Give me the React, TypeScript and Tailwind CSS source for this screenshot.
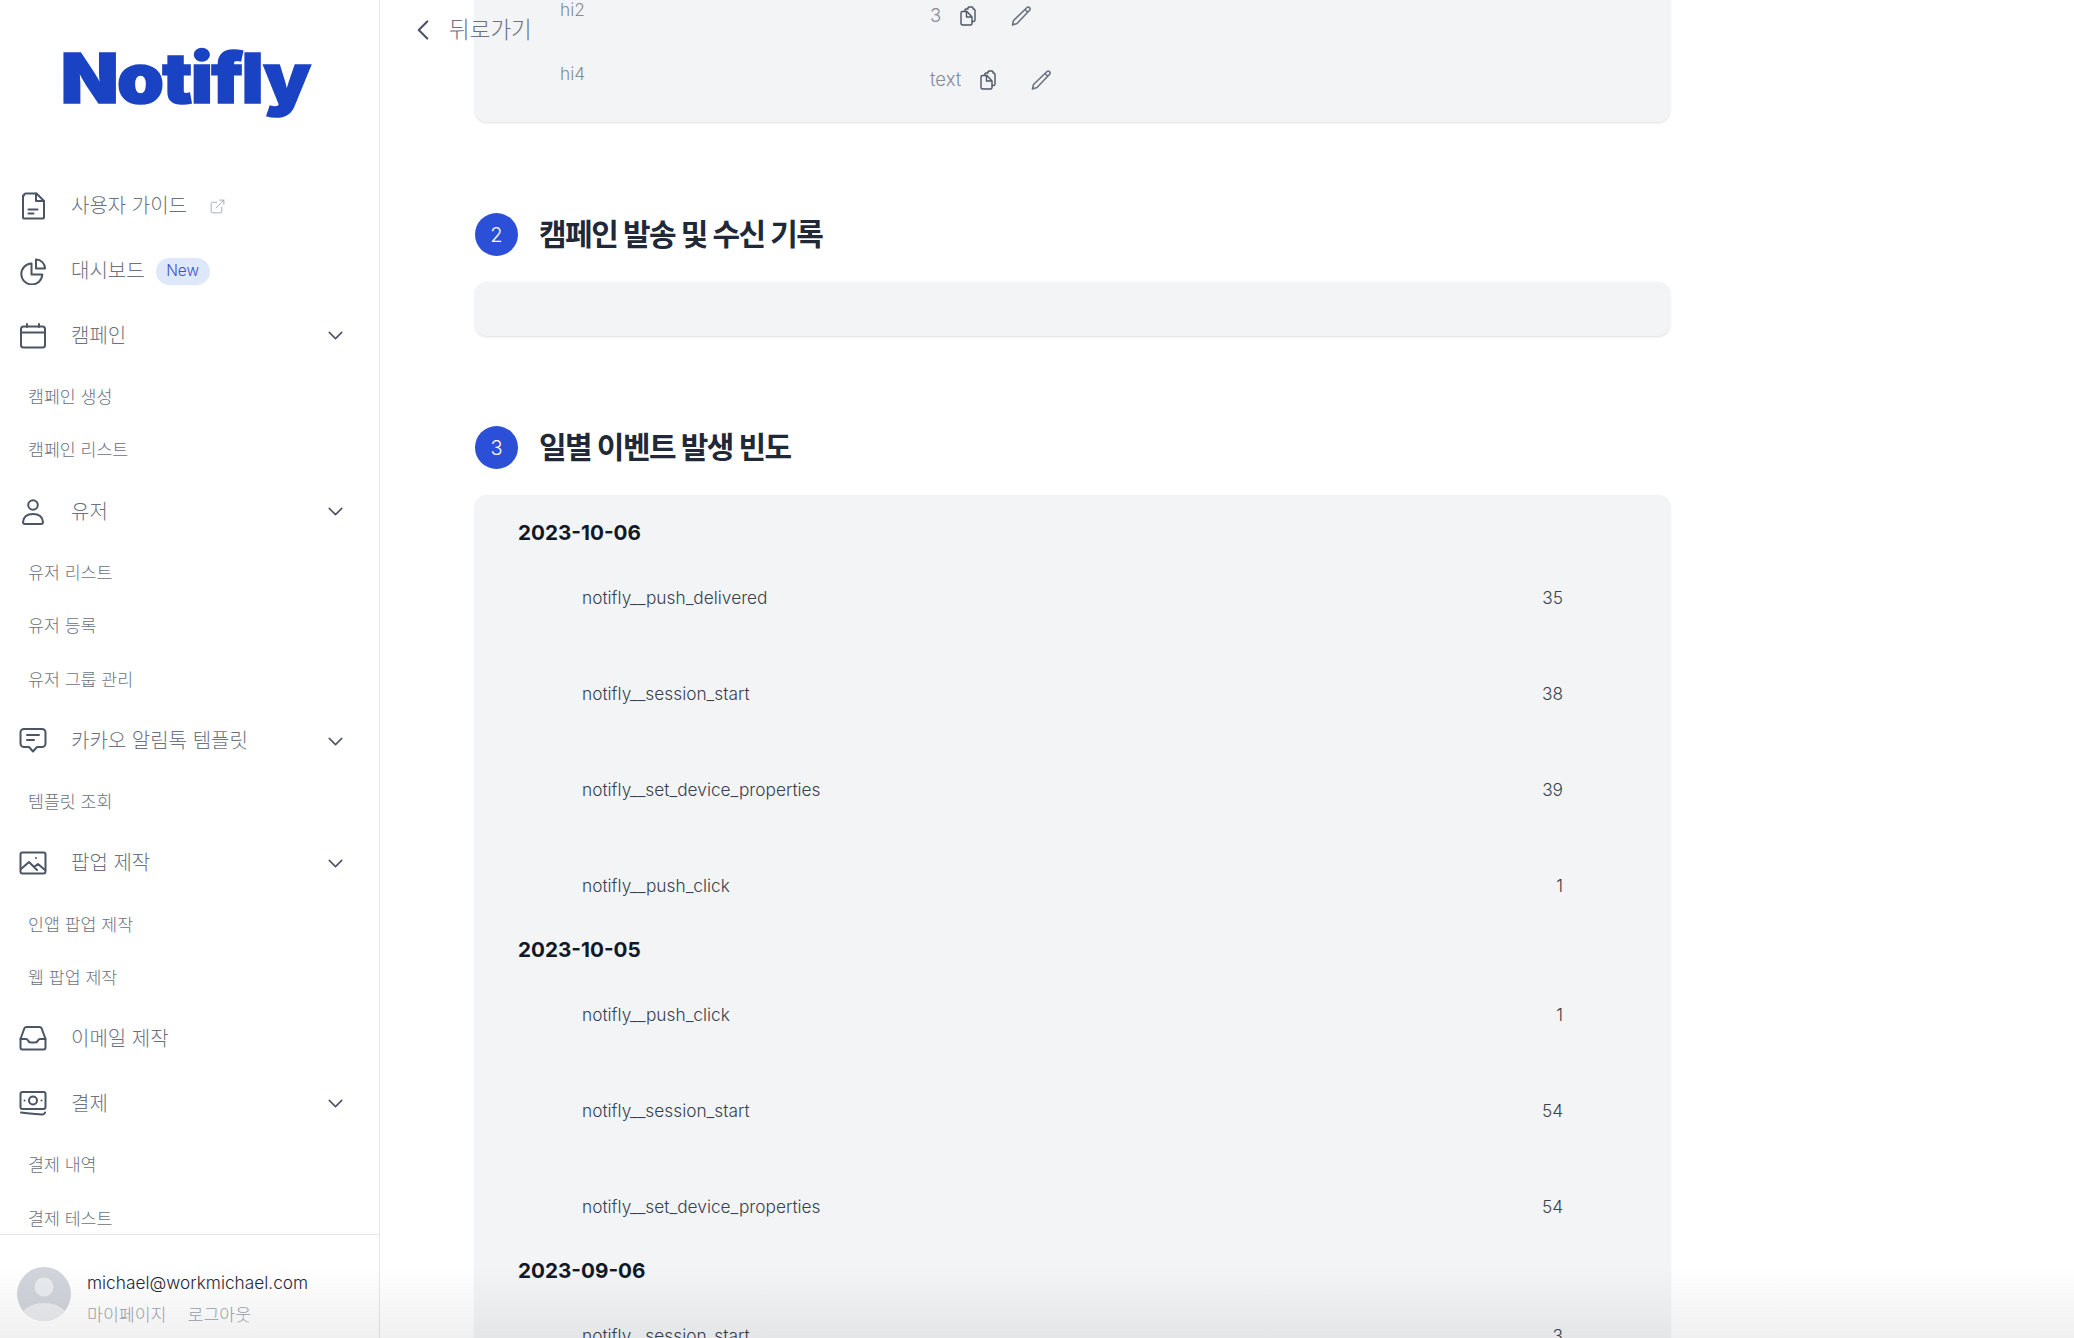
import { ChevronDown, ChevronLeft, ExternalLink } from 'lucide-react'
import type { ReactNode } from 'react'

const icons: Record<string, ReactNode> = {
  doc: (
    <>
      <path d="M5 3.500A2 2 0 0 1 7 1.500h10.500L25 9v16.500a1 1 0 0 1-1 1H5a1 1 0 0 1-1-1V3.500z" />
      <path d="M17 1.500V9h8" />
      <path d="M9.500 17.500h9M9.500 21.500h5" />
    </>
  ),
  pie: (
    <>
      <path d="M12.500 6.500a10.500 10.500 0 1 0 10.800 11H12.500V6.500z" />
      <path d="M17 2.500a9 9 0 0 1 9 9h-9v-9z" />
    </>
  ),
  calendar: (
    <>
      <rect x="2" y="4.500" width="24" height="21" rx="2.500" />
      <path d="M2 10.500h24M8 2v3M20 2v3" />
    </>
  ),
  user: (
    <>
      <circle cx="14" cy="7" r="4.800" />
      <path d="M14 16c-6 0-9.500 3.200-10 8 0 1.300 1 2 2 2h16c1 0 2-.7 2-2-.5-4.800-4-8-10-8z" />
    </>
  ),
  chat: (
    <>
      <path d="M5.500 2h17A3.500 3.500 0 0 1 26.500 5.500v11a3.500 3.500 0 0 1-3.500 3.500h-5l-4 4.500-4-4.500H5a3.500 3.500 0 0 1-3.500-3.500v-11A3.500 3.500 0 0 1 5.500 2z" />
      <path d="M8 8h12M8 13h7" />
    </>
  ),
  image: (
    <>
      <rect x="1.500" y="3.500" width="25" height="21" rx="2" />
      <path d="M2 20l8-7 8 8M15 18l4-3 7 6" />
      <circle cx="17" cy="9" r="1" fill="currentColor" stroke="none" />
    </>
  ),
  inbox: (
    <>
      <path d="M7.500 2h13c1 0 1.800.6 2.200 1.500L26.500 14v8.500a2 2 0 0 1-2 2h-21a2 2 0 0 1-2-2V14L5.300 3.500C5.700 2.600 6.500 2 7.500 2z" />
      <path d="M1.500 14h5.500c1 0 1.500.5 2 1.500.6 1.300 1.500 2 3 2h4c1.500 0 2.400-.7 3-2 .5-1 1-1.500 2-1.500h5.500" />
    </>
  ),
  cash: (
    <>
      <rect x="1.500" y="2" width="25" height="17" rx="2" />
      <circle cx="14" cy="10.500" r="4" />
      <path d="M5.500 10.500h.01M22.500 10.500h.01" />
      <path d="M2 22.500c7 1 14 1.500 21 2 1.500 0 2.500-.5 3-2" />
    </>
  ),
}

function NavIcon({ name }: { name: string }) {
  return (
    <svg
      viewBox="0 0 28 28"
      width={28}
      height={28}
      fill="none"
      stroke="currentColor"
      strokeWidth={2}
      strokeLinecap="round"
      strokeLinejoin="round"
      className="text-[#4b5563] shrink-0"
    >
      {icons[name]}
    </svg>
  )
}

function NavItem({ icon, label, arrow, children }: { icon: string; label: string; arrow?: boolean; children?: ReactNode }) {
  return (
    <div className="flex items-center h-[64.7px] pl-[19px] pr-[31px] shrink-0">
      <NavIcon name={icon} />
      <span className="ml-[24px] text-[20px] font-light text-[#6b7280] whitespace-nowrap">{label}</span>
      {children}
      {arrow && <ChevronDown size={25} strokeWidth={1.5} className="ml-auto text-[#4b5563]" />}
    </div>
  )
}

function SubList({ items }: { items: string[] }) {
  return (
    <div className="flex flex-col my-[2px] shrink-0">
      {items.map((item) => (
        <div key={item} className="h-[53.6px] flex items-center pl-[28px] text-[17.3px] font-light text-[#6b7280]">
          {item}
        </div>
      ))}
    </div>
  )
}

function Sidebar() {
  return (
    <aside className="w-[380px] h-full shrink-0 border-r border-[#e5e7eb] flex flex-col bg-white">
      <div className="h-[174px] shrink-0 flex justify-center pt-[36px] pr-[8px]">
        <span className="font-['Inter'] font-black text-[69px] leading-[84px] tracking-[-1.5px] text-[#1a43c4] [-webkit-text-stroke:1.5px_#1a43c4] scale-x-[1.09]">
          Notifly
        </span>
      </div>
      <nav className="flex-1 overflow-hidden flex flex-col">
        <NavItem icon="doc" label="사용자 가이드">
          <ExternalLink size={17} strokeWidth={1.25} className="ml-[22px] text-[#9ca3af]" />
        </NavItem>
        <NavItem icon="pie" label="대시보드">
          <span className="ml-[11px] h-[27px] w-[54px] rounded-full bg-[#dfe8fb] text-[#3b54c4] text-[15.4px] font-light flex items-center justify-center">
            New
          </span>
        </NavItem>
        <NavItem icon="calendar" label="캠페인" arrow />
        <SubList items={['캠페인 생성', '캠페인 리스트']} />
        <NavItem icon="user" label="유저" arrow />
        <SubList items={['유저 리스트', '유저 등록', '유저 그룹 관리']} />
        <NavItem icon="chat" label="카카오 알림톡 템플릿" arrow />
        <SubList items={['템플릿 조회']} />
        <NavItem icon="image" label="팝업 제작" arrow />
        <SubList items={['인앱 팝업 제작', '웹 팝업 제작']} />
        <NavItem icon="inbox" label="이메일 제작" />
        <NavItem icon="cash" label="결제" arrow />
        <SubList items={['결제 내역', '결제 테스트']} />
      </nav>
      <div className="h-[104px] shrink-0 border-t border-[#e5e7eb] flex pl-[17px] pt-[33px]">
        <svg viewBox="0 0 54 54" width={54} height={54} className="shrink-0 -mt-[1px]">
          <clipPath id="avatar-clip">
            <circle cx="27" cy="27" r="27" />
          </clipPath>
          <g clipPath="url(#avatar-clip)">
            <rect width="54" height="54" fill="#d1d5db" />
            <circle cx="27" cy="20" r="9.500" fill="#e9ebee" />
            <ellipse cx="27" cy="54" rx="25" ry="18" fill="#e9ebee" />
          </g>
        </svg>
        <div className="ml-[16px] flex flex-col">
          <span className="text-[17.3px] leading-[28px] font-light text-[#1f2937] mt-[1px]">michael@workmichael.com</span>
          <div className="flex gap-[21px] mt-[4px] text-[17.3px] font-light text-[#9ca3af] leading-[28px]">
            <span>마이페이지</span>
            <span>로그아웃</span>
          </div>
        </div>
      </div>
    </aside>
  )
}

function CopyIcon() {
  return (
    <svg viewBox="0 0 16 20" width={16} height={20} fill="none" stroke="currentColor" strokeWidth={1.4} strokeLinejoin="round" className="text-[#4b5563]">
      <path d="M5 5V4a1 1 0 0 1 1-1h2V2a1 1 0 0 1 1-1h3a1 1 0 0 1 1 1v1h.5A1.500 1.500 0 0 1 15 4.500V14a1.500 1.500 0 0 1-1.500 1.500H12" />
      <path d="M1 7a1.500 1.500 0 0 1 1.500-1.500H7l5 5.500v6.500a1.500 1.500 0 0 1-1.500 1.500h-8A1.500 1.500 0 0 1 1 17.500V7z" />
      <path d="M6.500 6v5h5" />
    </svg>
  )
}

function PencilIcon({ className }: { className: string }) {
  return (
    <svg viewBox="0 0 20 20" width={20} height={20} fill="none" stroke="currentColor" strokeWidth={1.6} strokeLinejoin="round" className={className}>
      <path d="M16 1.500c.8-.6 2-.4 2.600.3.6.7.6 1.700 0 2.400L6 17.500 1.500 19l1-4.500L16 1.500z" />
      <path d="M14 3.500l3 3" />
    </svg>
  )
}

function FieldRow({ name, value, editGap }: { name: string; value: string; editGap: string }) {
  return (
    <div className="flex h-[35px]">
      <span className="w-[370px] h-7 mt-[1px] text-[17.3px] leading-7 font-light text-[#858c98]">{name}</span>
      <div className="flex items-center h-7 mt-[7px]">
        <span className="text-[18.5px] font-light text-[#858c98]">{value}</span>
        <span className="ml-[19px]">
          <CopyIcon />
        </span>
        <PencilIcon className={`${editGap} text-[#6b7280]`} />
      </div>
    </div>
  )
}

function StepTitle({ step, title }: { step: number; title: string }) {
  return (
    <div className="flex items-center h-[43px] gap-[21px]">
      <span className="w-[43px] h-[43px] rounded-full bg-[#2b4fd6] text-white text-xl font-light flex items-center justify-center">
        {step}
      </span>
      <h2 className="text-[30px] font-bold tracking-[-1.5px] text-[#1f2937]">{title}</h2>
    </div>
  )
}

const eventDays = [
  {
    date: '2023-10-06',
    rows: [
      ['notifly__push_delivered', '35'],
      ['notifly__session_start', '38'],
      ['notifly__set_device_properties', '39'],
      ['notifly__push_click', '1'],
    ],
  },
  {
    date: '2023-10-05',
    rows: [
      ['notifly__push_click', '1'],
      ['notifly__session_start', '54'],
      ['notifly__set_device_properties', '54'],
    ],
  },
  {
    date: '2023-09-06',
    rows: [['notifly__session_start', '3']],
  },
]

export default function App() {
  return (
    <div className="relative flex w-[2074px] h-[1338px] overflow-hidden bg-white font-['Inter','Noto_Sans_CJK_KR',sans-serif]">
      <Sidebar />

      <main className="flex-1 overflow-hidden pl-[95px] pr-[24px]">
        <div className="w-[1195px] -mt-[60px] flex flex-col">
          <div className="bg-[#f3f4f6] rounded-xl shadow-sm pl-[85px] pt-[55px] pb-[28px] flex flex-col gap-[29px]">
            <FieldRow name="hi2" value="3" editGap="ml-[35px]" />
            <FieldRow name="hi4" value="text" editGap="ml-[35px]" />
          </div>

          <div className="mt-[91px]">
            <StepTitle step={2} title="캠페인 발송 및 수신 기록" />
          </div>
          <div className="mt-[26px] h-[54px] bg-[#f3f4f6] rounded-xl shadow-sm" />

          <div className="mt-[90px]">
            <StepTitle step={3} title="일별 이벤트 발생 빈도" />
          </div>
          <div className="mt-[26px] bg-[#f3f4f6] rounded-xl shadow-sm pl-[43px] pr-[43px] pt-[24px] pb-[40px] flex flex-col gap-[36px]">
            {eventDays.map((day) => (
              <div key={day.date}>
                <h3 className="h-7 mb-[37px] text-[20.7px] leading-7 font-bold text-[#111827]">{day.date}</h3>
                <div className="flex flex-col gap-[68px] px-[64px]">
                  {day.rows.map(([name, count]) => (
                    <div key={name} className="flex justify-between h-7 text-[17.3px] leading-7 font-light text-[#374151]">
                      <span>{name}</span>
                      <span>{count}</span>
                    </div>
                  ))}
                </div>
              </div>
            ))}
          </div>
        </div>
      </main>

      {/* back link sits over the scrolled content */}
      <div className="absolute left-[406px] top-[13px] flex items-center gap-[9px] text-[#4b5563]">
        <ChevronLeft size={34} strokeWidth={1.5} />
        <span className="text-[22.5px] font-light text-[#6b7280]">뒤로가기</span>
      </div>

      {/* bottom fade */}
      <div className="absolute left-0 right-0 bottom-0 h-[72px] bg-gradient-to-b from-transparent to-[#0000000f] pointer-events-none" />
    </div>
  )
}
